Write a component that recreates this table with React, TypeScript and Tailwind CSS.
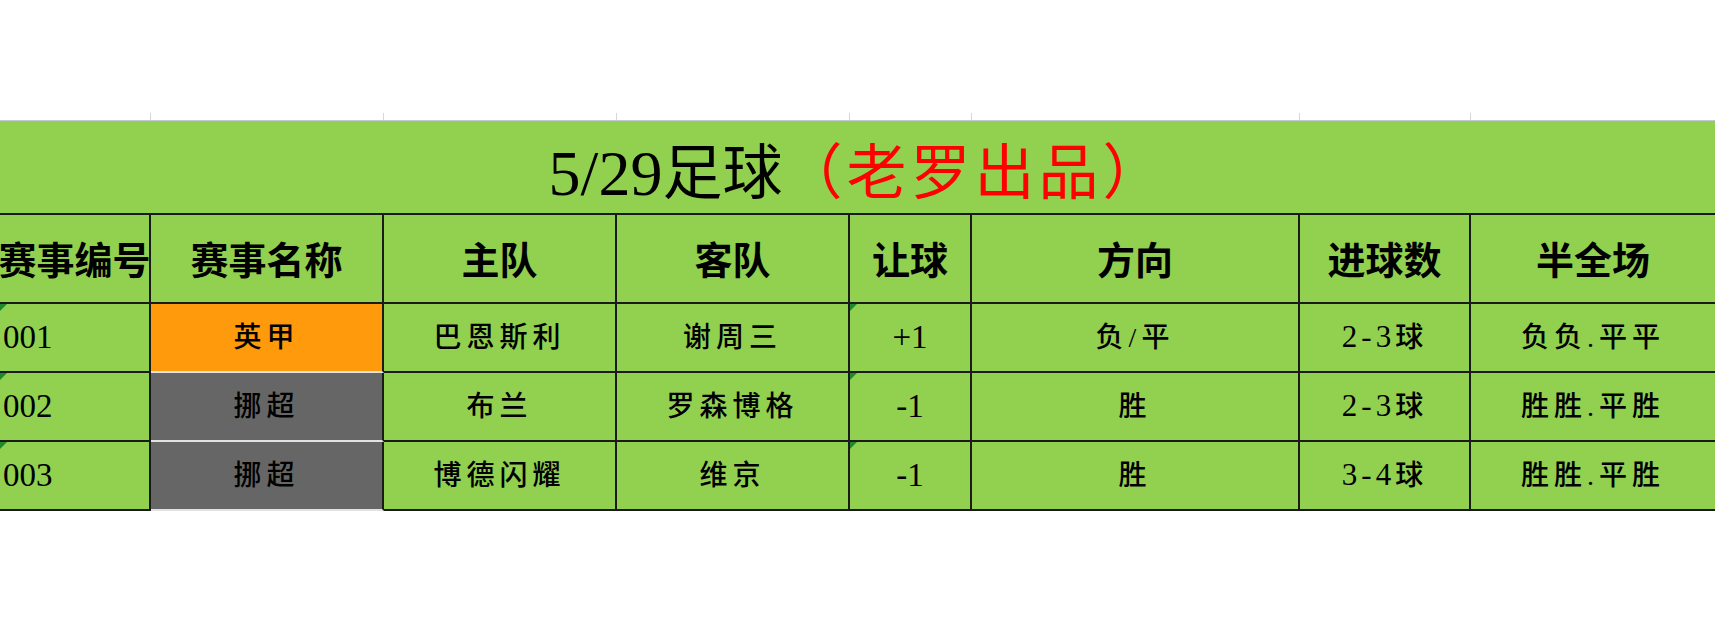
import React from 'react';

const grid = 'grid grid-cols-[151px_233px_233px_233px_122px_328px_171px_1fr]';
const serif = "font-['Liberation_Serif','Noto_Sans_CJK_SC',serif]";

type Match = {
  id: string;
  league: string;
  leagueBg: string;
  home: string;
  away: string;
  handicap: string;
  direction: string;
  goals: string;
  halfFull: string;
};

const matches: Match[] = [
  { id: '001', league: '英甲', leagueBg: 'bg-[#fe9a0b]', home: '巴恩斯利', away: '谢周三', handicap: '+1', direction: '负/平', goals: '2-3球', halfFull: '负负.平平' },
  { id: '002', league: '挪超', leagueBg: 'bg-[#666666]', home: '布兰', away: '罗森博格', handicap: '-1', direction: '胜', goals: '2-3球', halfFull: '胜胜.平胜' },
  { id: '003', league: '挪超', leagueBg: 'bg-[#666666]', home: '博德闪耀', away: '维京', handicap: '-1', direction: '胜', goals: '3-4球', halfFull: '胜胜.平胜' },
];

const headers = ['赛事编号', '赛事名称', '主队', '客队', '让球', '方向', '进球数', '半全场'];

// little green "number stored as text" marker excel draws in the corner
function Flag() {
  return (
    <span className="absolute left-0 top-0 w-0 h-0 border-t-[7px] border-t-[#1f8a2a] border-r-[7px] border-r-transparent" />
  );
}

function Cell({ children, className = '', last = false }: { children?: React.ReactNode; className?: string; last?: boolean }) {
  return (
    <div
      className={`relative flex items-center justify-center overflow-hidden whitespace-nowrap border-b-2 border-b-[#1b1b1b] ${
        last ? '' : 'border-r-2 border-r-[#1b1b1b]'
      } ${className}`}
    >
      {children}
    </div>
  );
}

export default function App() {
  return (
    <div className={`w-[1715px] h-[637px] bg-white flex flex-col text-black ${serif}`}>
      <div className="h-[113px]" />

      {/* faint sheet gridline ticks above the table */}
      <div className={`${grid} h-[7px]`}>
        {headers.map((h, i) => (
          <div key={h} className={i < headers.length - 1 ? 'border-r border-r-[#d3d7dd]' : ''} />
        ))}
      </div>

      <div className="flex flex-col bg-[#92d050]">
        <div className="h-[95px] flex items-center justify-center pt-[13px] border-t border-t-[#c3c9d2] border-b-2 border-b-[#1b1b1b] text-[60px] leading-none">
          <span className="text-[64px]">5/29</span>
          <span>足球</span>
          <span className="text-[#ff0000] tracking-[4px]">（老罗出品）</span>
        </div>

        <div className={`${grid} h-[89px]`}>
          {headers.map((h, i) => (
            <Cell key={h} last={i === headers.length - 1} className="text-[38px] font-bold pt-[6px]">
              {h}
            </Cell>
          ))}
        </div>

        {matches.map((m) => (
          <div key={m.id} className={`${grid} h-[69px] text-[28px] font-medium`}>
            <Cell className="justify-start pl-[3px] text-[33px]">
              <Flag />
              {m.id}
            </Cell>
            <Cell className={`${m.leagueBg} border-b-[#e2e2e2] tracking-[5px]`}>{m.league}</Cell>
            <Cell className="tracking-[5px]">{m.home}</Cell>
            <Cell className="tracking-[5px]">{m.away}</Cell>
            <Cell className="text-[33px]">
              <Flag />
              {m.handicap}
            </Cell>
            <Cell className="tracking-[5px]">{m.direction}</Cell>
            <Cell className="tracking-[4px]">
              <span className="text-[31px]">{m.goals.slice(0, 3)}</span>
              {m.goals.slice(3)}
            </Cell>
            <Cell last className="tracking-[5px]">{m.halfFull}</Cell>
          </div>
        ))}
      </div>
    </div>
  );
}
